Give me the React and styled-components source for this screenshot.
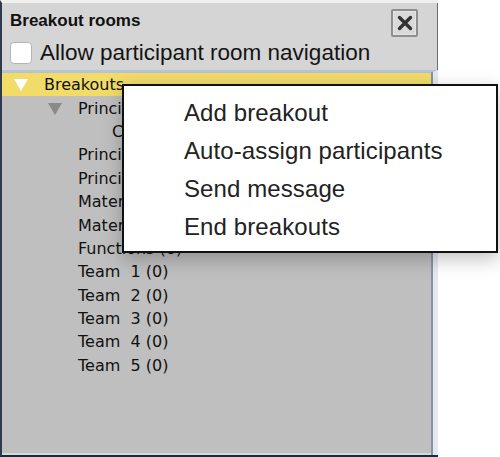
import React from "react";
import styled, { createGlobalStyle } from "styled-components";

const GlobalStyle = createGlobalStyle`
  html, body {
    margin: 0;
    padding: 0;
    background: #ffffff;
  }
  body {
    font-family: "Liberation Sans", Arial, sans-serif;
  }
`;

const rooms = [
  { label: "Principal A (0)", level: 1, open: true },
  { label: "Coordinator (0)", level: 2 },
  { label: "Principal B (0)", level: 1 },
  { label: "Principal C (0)", level: 1 },
  { label: "Materials A (0)", level: 1 },
  { label: "Materials B (0)", level: 1 },
  { label: "Functions (0)", level: 1 },
  { label: "Team\u00a0 1 (0)", level: 1 },
  { label: "Team\u00a0 2 (0)", level: 1 },
  { label: "Team\u00a0 3 (0)", level: 1 },
  { label: "Team\u00a0 4 (0)", level: 1 },
  { label: "Team\u00a0 5 (0)", level: 1 },
];

const menuItems = [
  "Add breakout",
  "Auto-assign participants",
  "Send message",
  "End breakouts",
];

function App() {
  return (
    <Page>
      <GlobalStyle />
      <Window>
        <Header>
          <TitleRow>
            <Title>Breakout rooms</Title>
            <CloseButton aria-label="Close">
              <svg width="18" height="18" viewBox="0 0 18 18">
                <path
                  d="M3.5 3.5 L14.5 14.5 M14.5 3.5 L3.5 14.5"
                  stroke="#333"
                  strokeWidth="3.4"
                  strokeLinecap="round"
                />
              </svg>
            </CloseButton>
          </TitleRow>
          <CheckRow>
            <CheckBox />
            <CheckLabel>Allow participant room navigation</CheckLabel>
          </CheckRow>
        </Header>
        <Tree>
          <TreeRow $selected $level={0}>
            <Arrow $color="#ffffff" />
            <RowText>Breakouts</RowText>
          </TreeRow>
          {rooms.map((r, i) => (
            <TreeRow key={i} $level={r.level}>
              {r.open ? <Arrow $color="#8a8a8a" /> : <Spacer />}
              <RowText>{r.label}</RowText>
            </TreeRow>
          ))}
        </Tree>
      </Window>

      <Menu>
        {menuItems.map((m) => (
          <MenuItem key={m}>{m}</MenuItem>
        ))}
      </Menu>
    </Page>
  );
}

export default App;

const Page = styled.div`
  position: relative;
  width: 500px;
  height: 457px;
  overflow: hidden;
`;

const Window = styled.div`
  width: 438px;
  height: 457px;
  box-sizing: border-box;
  display: flex;
  flex-direction: column;
  border-top: 3px solid #efefef;
  border-left: 2px solid #2f3a4c;
  border-bottom: 2px solid #1f2838;
  background: #d5d5d5;
`;

const Header = styled.div`
  display: flex;
  flex-direction: column;
  background: #d5d5d5;
  border-right: 1px solid #6d6d6d;
  padding: 0 0 3px 8px;
`;

const TitleRow = styled.div`
  display: flex;
  align-items: center;
  justify-content: space-between;
  height: 35px;
  padding-right: 19px;
`;

const Title = styled.div`
  font-weight: bold;
  font-size: 17px;
  color: #111;
  margin-top: 1px;
`;

const CloseButton = styled.div`
  width: 23px;
  height: 24px;
  display: flex;
  align-items: center;
  justify-content: center;
  border: 2px solid #8e8e8e;
  box-shadow: inset 0 0 0 1px #e4e4e4;
  border-radius: 2px;
  background: #dadada;
  margin-top: 4px;
`;

const CheckRow = styled.div`
  display: flex;
  align-items: center;
  gap: 8px;
  height: 29px;
`;

const CheckBox = styled.div`
  width: 20px;
  height: 20px;
  margin-top: 1px;
  background: #ffffff;
  border: 1px solid #b4b4b4;
  border-radius: 4px;
`;

const CheckLabel = styled.div`
  font-size: 22.5px;
  color: #141414;
`;

const Tree = styled.div`
  flex: 1;
  display: flex;
  flex-direction: column;
  background: #bfbfbf;
  border-top: 2px solid #b4c4da;
  border-right: 5px solid #e3e9f3;
  box-shadow: inset -2px 0 0 #8c929c, inset 0 -2px 0 #d9d9d9;
  padding-top: 1px;
`;

const TreeRow = styled.div`
  display: flex;
  align-items: center;
  height: 23.4px;
  padding-left: ${(p) => 12 + p.$level * 34}px;
  background: ${(p) => (p.$selected ? "#f1dc69" : "transparent")};
  margin-right: 2px;
`;

const Arrow = styled.span`
  flex: none;
  width: 0;
  height: 0;
  border-left: 7px solid transparent;
  border-right: 7px solid transparent;
  border-top: 12px solid ${(p) => p.$color};
  margin-right: 16px;
  margin-top: 1px;
`;

const Spacer = styled.span`
  flex: none;
  width: 30px;
`;

const RowText = styled.span`
  font-family: "DejaVu Sans", Verdana, sans-serif;
  font-size: 16px;
  color: #111;
  white-space: pre;
`;

const Menu = styled.div`
  position: absolute;
  left: 122px;
  top: 84px;
  width: 376px;
  height: 169px;
  box-sizing: border-box;
  background: #ffffff;
  border: 2px solid #111;
  box-shadow: 0 6px 18px rgba(0, 0, 0, 0.25);
  display: flex;
  flex-direction: column;
  padding: 8px 0 0 60px;
`;

const MenuItem = styled.div`
  height: 38px;
  display: flex;
  align-items: center;
  font-size: 24px;
  letter-spacing: 0.1px;
  color: #222;
`;
